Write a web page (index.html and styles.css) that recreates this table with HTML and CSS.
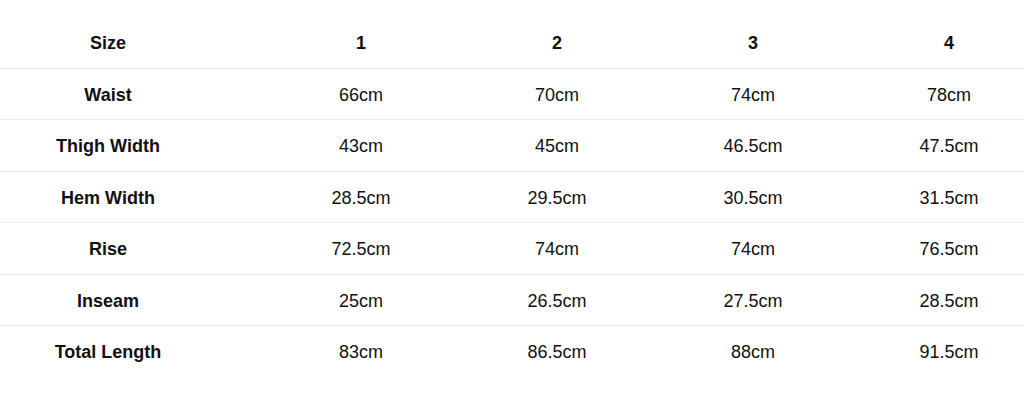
FILE: index.html
```html
<!DOCTYPE html>
<html>
<head>
<meta charset="utf-8">
<link rel="stylesheet" href="styles.css">
</head>
<body>
<div class="wrap">
<table class="size-table">
<colgroup>
<col class="c-label"><col class="c-val"><col class="c-val"><col class="c-val"><col class="c-val">
</colgroup>
<tbody>
<tr class="head"><td class="label">Size</td><td>1</td><td>2</td><td>3</td><td>4</td></tr>
<tr><td class="label">Waist</td><td>66cm</td><td>70cm</td><td>74cm</td><td>78cm</td></tr>
<tr><td class="label">Thigh Width</td><td>43cm</td><td>45cm</td><td>46.5cm</td><td>47.5cm</td></tr>
<tr><td class="label">Hem Width</td><td>28.5cm</td><td>29.5cm</td><td>30.5cm</td><td>31.5cm</td></tr>
<tr><td class="label">Rise</td><td>72.5cm</td><td>74cm</td><td>74cm</td><td>76.5cm</td></tr>
<tr><td class="label">Inseam</td><td>25cm</td><td>26.5cm</td><td>27.5cm</td><td>28.5cm</td></tr>
<tr><td class="label">Total Length</td><td>83cm</td><td>86.5cm</td><td>88cm</td><td>91.5cm</td></tr>
</tbody>
</table>
</div>
</body>
</html>
```
FILE: styles.css
```css
html, body {
  margin: 0;
  padding: 0;
  background: #fff;
  overflow: hidden;
}
body {
  font-family: "Liberation Sans", Arial, sans-serif;
  color: #111;
}
.wrap {
  width: 1024px;
  overflow: hidden;
  padding-top: 17px;
}
.size-table {
  width: 1047px;
  table-layout: fixed;
  border-collapse: collapse;
}
.c-label { width: 263px; }
.c-val { width: 196px; }
.size-table td {
  padding: 16px 0 14px;
  line-height: 20.5px;
  font-size: 18px;
  text-align: center;
  border-bottom: 1px solid #ececec;
}
.size-table tr:last-child td {
  border-bottom: none;
}
.size-table td.label {
  font-weight: bold;
  padding-right: 47px;
}
.size-table tr.head td {
  font-weight: bold;
}
```
